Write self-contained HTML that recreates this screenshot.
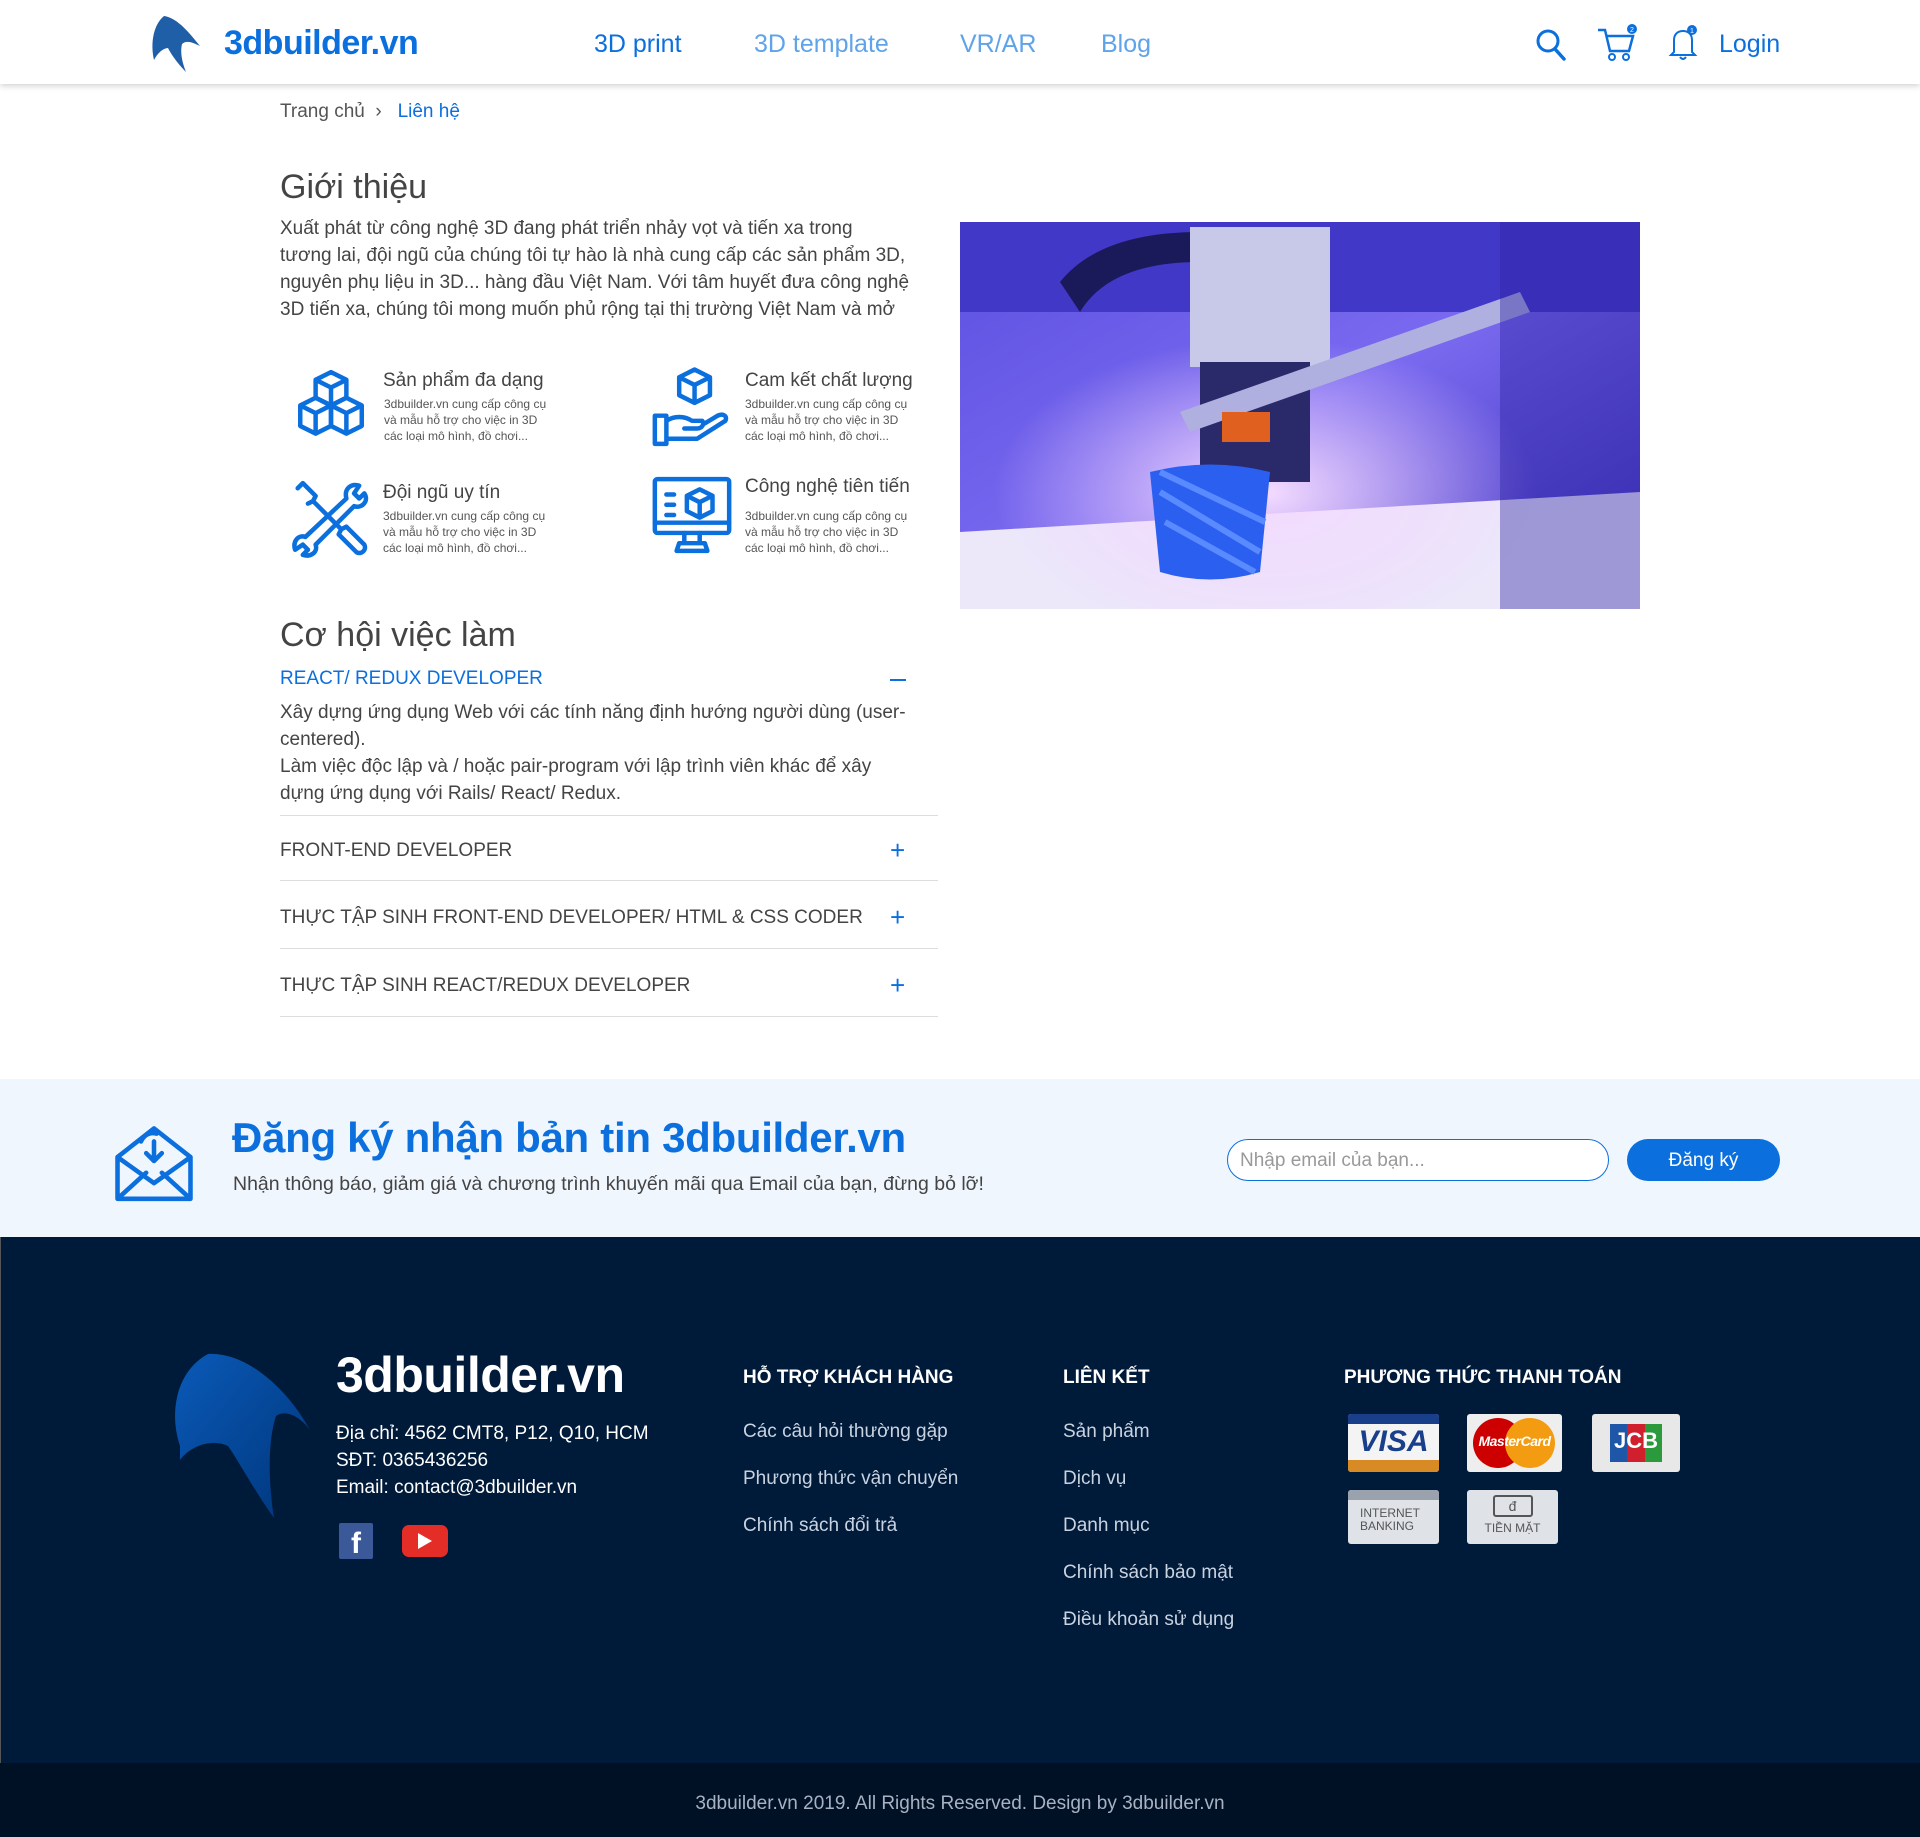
<!DOCTYPE html>
<html><head><meta charset="utf-8"><style>
*{margin:0;padding:0;box-sizing:border-box}
body{width:1920px;height:1837px;position:relative;font-family:"Liberation Sans",sans-serif;background:#fff;color:#444;overflow:hidden}
.a{position:absolute;white-space:nowrap}
.blue{color:#0b6fde}
.hdr{position:absolute;left:0;top:0;width:1920px;height:84px;background:#fff;box-shadow:0 2px 6px rgba(0,0,0,.18)}
.nav{font-size:25px;color:#5fa3ea;top:30px}
.p{font-size:19px;line-height:27px;color:#444}
.fs{font-size:12px;line-height:16px;color:#555}
.job{font-size:19px;color:#444;left:280px}
.hr{position:absolute;left:280px;width:658px;height:1px;background:#ddd}
.plus{position:absolute;left:890px;font-size:26px;color:#0b6fde;font-weight:300}
.fl{font-size:19px;color:#c9d3e0}
.fh{font-size:19px;font-weight:bold;color:#fff;top:1367px}
.card{position:absolute;border-radius:3px;overflow:hidden}
</style></head><body>
<div class="hdr"></div>
<svg class="a" style="left:150px;top:12px" width="55" height="62" viewBox="0 0 55 62"><path d="M4 48 C0 30 4 12 14 4 C28 6 40 22 50 34 C42 30 36 28 32 32 C30 40 32 50 36 60 C26 50 20 40 18 36 C14 36 8 40 4 48Z" fill="#1f5fa8"/></svg>
<div class="a" style="left:224px;top:24px;font-size:34px;font-weight:bold;color:#0b6fde;letter-spacing:-0.5px">3dbuilder.vn</div>
<div class="a nav" style="left:594px;color:#0b6fde">3D print</div>
<div class="a nav" style="left:754px">3D template</div>
<div class="a nav" style="left:960px">VR/AR</div>
<div class="a nav" style="left:1101px">Blog</div>
<svg class="a" style="left:1535px;top:28px" width="32" height="34" viewBox="0 0 32 34"><circle cx="13" cy="13" r="10" fill="none" stroke="#0b6fde" stroke-width="3"/><path d="M20 21 L29 31" stroke="#0b6fde" stroke-width="3.5" stroke-linecap="round"/></svg>
<svg class="a" style="left:1596px;top:24px" width="42" height="38" viewBox="0 0 42 38"><path d="M2 6 H9 L14 27 H33 L37 12 H11" fill="none" stroke="#0b6fde" stroke-width="2.5"/><circle cx="16" cy="33" r="3" fill="none" stroke="#0b6fde" stroke-width="2"/><circle cx="30" cy="33" r="3" fill="none" stroke="#0b6fde" stroke-width="2"/><circle cx="36" cy="5" r="5" fill="#0b6fde"/><text x="36" y="8" font-size="7" fill="#fff" text-anchor="middle">2</text></svg>
<svg class="a" style="left:1668px;top:24px" width="32" height="38" viewBox="0 0 32 38"><path d="M6 28 V16 C6 10 10 7 15 7 C20 7 24 10 24 16 V28 L27 31 H3Z" fill="none" stroke="#0b6fde" stroke-width="2"/><path d="M12 33 Q15 37 18 33" fill="none" stroke="#0b6fde" stroke-width="2"/><circle cx="24" cy="6" r="5" fill="#0b6fde"/><text x="24" y="9" font-size="7" fill="#fff" text-anchor="middle">1</text></svg>
<div class="a" style="left:1719px;top:30px;font-size:25px;color:#0b6fde">Login</div>

<div class="a" style="left:280px;top:101px;font-size:19px;color:#555">Trang chủ &nbsp;›&nbsp;&nbsp; <span class="blue">Liên hệ</span></div>
<div class="a" style="left:280px;top:168px;font-size:34px;color:#444">Giới thiệu</div>
<div class="a p" style="left:280px;top:215px">Xuất phát từ công nghệ 3D đang phát triển nhảy vọt và tiến xa trong<br>tương lai, đội ngũ của chúng tôi tự hào là nhà cung cấp các sản phẩm 3D,<br>nguyên phụ liệu in 3D... hàng đầu Việt Nam. Với tâm huyết đưa công nghệ<br>3D tiến xa, chúng tôi mong muốn phủ rộng tại thị trường Việt Nam và mở</div>

<svg class="a" style="left:290px;top:367px" width="82" height="82" viewBox="0 0 64 64" fill="none" stroke="#0b6fde" stroke-width="3.5" stroke-linejoin="round"><path d="M32 4 L44 10 V24 L32 30 L20 24 V10Z M20 10 L32 16 L44 10 M32 16 V30"/><path d="M20 24 L32 30 V46 L20 52 L8 46 V30Z M8 30 L20 36 L32 30 M20 36 V52"/><path d="M44 24 L56 30 V46 L44 52 L32 46 V30Z M32 30 L44 36 L56 30 M44 36 V52"/></svg>
<div class="a" style="left:383px;top:370px;font-size:19px;color:#444">Sản phẩm đa dạng</div>
<div class="a fs" style="left:384px;top:396px">3dbuilder.vn cung cấp công cụ<br>và mẫu hỗ trợ cho việc in 3D<br>các loại mô hình, đồ chơi...</div>

<svg class="a" style="left:651px;top:367px" width="82" height="82" viewBox="0 0 64 64" fill="none" stroke="#0b6fde" stroke-width="3.5" stroke-linejoin="round" stroke-linecap="round"><path d="M34 2 L46 8 V22 L34 28 L22 22 V8Z M22 8 L34 14 L46 8 M34 14 V28"/><path d="M3 38 H12 V60 H3Z M12 42 C18 38 26 38 32 42 H40 C42 44 40 48 36 48 H26 M12 56 H36 L58 42 C60 38 56 36 52 38 L42 44"/></svg>
<div class="a" style="left:745px;top:370px;font-size:19px;color:#444">Cam kết chất lượng</div>
<div class="a fs" style="left:745px;top:396px">3dbuilder.vn cung cấp công cụ<br>và mẫu hỗ trợ cho việc in 3D<br>các loại mô hình, đồ chơi...</div>

<svg class="a" style="left:290px;top:478px" width="82" height="82" viewBox="0 0 64 64" fill="none" stroke="#0b6fde" stroke-width="3.5" stroke-linejoin="round" stroke-linecap="round"><path d="M6 8 L10 4 L20 14 L18 18 L40 40 L44 38 L58 52 C60 56 56 60 52 58 L38 44 L40 40 M18 18 L14 20 Z"/><path d="M54 6 C48 4 42 8 44 16 L12 46 C6 44 2 50 4 56 L10 52 L14 56 L10 60 C16 62 22 58 20 52 L50 22 C56 24 62 18 58 12 L54 16 L50 12Z"/></svg>
<div class="a" style="left:383px;top:482px;font-size:19px;color:#444">Đội ngũ uy tín</div>
<div class="a fs" style="left:383px;top:508px">3dbuilder.vn cung cấp công cụ<br>và mẫu hỗ trợ cho việc in 3D<br>các loại mô hình, đồ chơi...</div>

<svg class="a" style="left:651px;top:474px" width="82" height="82" viewBox="0 0 64 64" fill="none" stroke="#0b6fde" stroke-width="3.5" stroke-linejoin="round" stroke-linecap="round"><rect x="3" y="4" width="58" height="42" rx="2"/><path d="M3 38 H61 M26 46 V54 M38 46 V54 M20 60 H44 L42 54 H22Z M12 16 H18 M12 24 H18 M12 32 H18"/><path d="M38 12 L48 17 V29 L38 34 L28 29 V17Z M28 17 L38 22 L48 17 M38 22 V34"/></svg>
<div class="a" style="left:745px;top:476px;font-size:19px;color:#444">Công nghệ tiên tiến</div>
<div class="a fs" style="left:745px;top:508px">3dbuilder.vn cung cấp công cụ<br>và mẫu hỗ trợ cho việc in 3D<br>các loại mô hình, đồ chơi...</div>

<svg class="a" style="left:960px;top:222px" width="680" height="387" viewBox="0 0 680 387">
<defs><linearGradient id="bg" x1="0" y1="0" x2="1" y2="1"><stop offset="0" stop-color="#5a4fe0"/><stop offset=".5" stop-color="#7a6af0"/><stop offset="1" stop-color="#3a2fb8"/></linearGradient>
<radialGradient id="gl" cx=".45" cy=".7" r=".4"><stop offset="0" stop-color="#f4dcff"/><stop offset="1" stop-color="#f0d0ff" stop-opacity="0"/></radialGradient></defs>
<rect width="680" height="387" fill="url(#bg)"/>
<rect x="0" y="0" width="680" height="90" fill="#4238c8"/>
<path d="M0 310 L680 270 V387 H0Z" fill="#ece8fa"/>
<rect width="680" height="387" fill="url(#gl)"/>
<path d="M100 60 Q140 10 240 10 L240 40 Q150 40 120 90Z" fill="#1a1a5a"/>
<rect x="230" y="5" width="140" height="140" fill="#c8c8e8"/>
<rect x="240" y="140" width="110" height="120" fill="#2a2a6a"/>
<path d="M220 190 L560 70 L570 90 L230 210Z" fill="#b0b0e0"/>
<rect x="262" y="190" width="48" height="30" fill="#e06020"/>
<path d="M190 250 Q250 235 310 250 L300 350 Q250 365 200 350Z" fill="#2a5ff0"/>
<path d="M200 270 L300 330 M205 300 L295 350 M200 250 L305 300" stroke="#5a8aff" stroke-width="6"/>
<rect x="540" y="0" width="140" height="387" fill="#2a20a0" opacity=".4"/>
</svg>

<div class="a" style="left:280px;top:616px;font-size:34px;color:#444">Cơ hội việc làm</div>
<div class="a" style="left:280px;top:668px;font-size:19px;color:#0b6fde">REACT/ REDUX DEVELOPER</div>
<div class="a" style="left:890px;top:679px;width:16px;height:2px;background:#0b6fde"></div>
<div class="a p" style="left:280px;top:699px">Xây dựng ứng dụng Web với các tính năng định hướng người dùng (user-<br>centered).<br>Làm việc độc lập và / hoặc pair-program với lập trình viên khác để xây<br>dựng ứng dụng với Rails/ React/ Redux.</div>
<div class="hr" style="top:815px"></div>
<div class="a job" style="top:840px">FRONT-END DEVELOPER</div><div class="plus" style="top:835px">+</div>
<div class="hr" style="top:880px"></div>
<div class="a job" style="top:907px">THỰC TẬP SINH FRONT-END DEVELOPER/ HTML &amp; CSS CODER</div><div class="plus" style="top:902px">+</div>
<div class="hr" style="top:948px"></div>
<div class="a job" style="top:975px">THỰC TẬP SINH REACT/REDUX DEVELOPER</div><div class="plus" style="top:970px">+</div>
<div class="hr" style="top:1016px"></div>

<div class="a" style="left:0;top:1079px;width:1920px;height:158px;background:#eff6fe"></div>
<svg class="a" style="left:112px;top:1118px" width="84" height="86" viewBox="0 0 64 66" fill="none" stroke="#0b6fde" stroke-width="3.5" stroke-linejoin="round" stroke-linecap="round"><path d="M4 30 L32 8 L60 30 V62 H4Z M4 62 L26 42 M60 62 L38 42 M4 30 L32 50 L60 30"/><path d="M22 18 Q26 10 34 12 M32 18 V32 M26 27 L32 33 L38 27"/></svg>
<div class="a" style="left:232px;top:1114px;font-size:42px;font-weight:bold;color:#0b6fde;letter-spacing:-0.3px">Đăng ký nhận bản tin 3dbuilder.vn</div>
<div class="a" style="left:233px;top:1173px;font-size:19.5px;color:#444">Nhận thông báo, giảm giá và chương trình khuyến mãi qua Email của bạn, đừng bỏ lỡ!</div>
<div class="a" style="left:1227px;top:1139px;width:382px;height:42px;border:1px solid #0b6fde;border-radius:21px;background:#fff;font-size:19px;color:#999;padding:10px 12px">Nhập email của bạn...</div>
<div class="a" style="left:1627px;top:1139px;width:153px;height:42px;border-radius:21px;background:#0b6fde;color:#fff;font-size:19px;text-align:center;line-height:44px">Đăng ký</div>

<div class="a" style="left:0;top:1237px;width:1920px;height:526px;background:#001a39;border-left:1px solid #555"></div>
<div class="a" style="left:0;top:1763px;width:1920px;height:74px;background:#001126"></div>
<div class="a" style="left:0;top:1793px;width:1920px;text-align:center;font-size:19px;color:#a8b2c2">3dbuilder.vn 2019. All Rights Reserved. Design by 3dbuilder.vn</div>

<svg class="a" style="left:168px;top:1350px" width="142" height="170" viewBox="0 0 142 170"><defs><linearGradient id="lg" x1="0" y1="0" x2="1" y2="1"><stop offset="0" stop-color="#0a5ab8"/><stop offset="1" stop-color="#00357a"/></linearGradient></defs><path d="M12 96 C0 60 10 20 40 4 C80 2 120 40 142 80 C130 64 116 60 108 66 C100 90 100 130 106 168 C86 140 70 110 60 96 C44 88 22 96 12 110Z" fill="url(#lg)"/></svg>
<div class="a" style="left:336px;top:1346px;font-size:50px;font-weight:bold;color:#fff;letter-spacing:-0.5px">3dbuilder.vn</div>
<div class="a" style="left:336px;top:1420px;font-size:19px;line-height:27px;color:#fff">Địa chỉ: 4562 CMT8, P12, Q10, HCM<br>SĐT: 0365436256<br>Email: contact@3dbuilder.vn</div>
<div class="a" style="left:339px;top:1523px;width:34px;height:36px;background:#3b5998;border-radius:2px;color:#fff;font-size:30px;font-weight:bold;text-align:center;line-height:42px;overflow:hidden">f</div>
<div class="a" style="left:402px;top:1525px;width:46px;height:32px;background:#e52d27;border-radius:7px"></div>
<svg class="a" style="left:418px;top:1533px" width="14" height="16"><path d="M0 0 L14 8 L0 16Z" fill="#fff"/></svg>

<div class="a fh" style="left:743px">HỖ TRỢ KHÁCH HÀNG</div>
<div class="a fh" style="left:1063px">LIÊN KẾT</div>
<div class="a fh" style="left:1344px">PHƯƠNG THỨC THANH TOÁN</div>
<div class="a fl" style="left:743px;top:1421px">Các câu hỏi thường gặp</div>
<div class="a fl" style="left:743px;top:1468px">Phương thức vận chuyển</div>
<div class="a fl" style="left:743px;top:1515px">Chính sách đổi trả</div>
<div class="a fl" style="left:1063px;top:1421px">Sản phẩm</div>
<div class="a fl" style="left:1063px;top:1468px">Dịch vụ</div>
<div class="a fl" style="left:1063px;top:1515px">Danh mục</div>
<div class="a fl" style="left:1063px;top:1562px">Chính sách bảo mật</div>
<div class="a fl" style="left:1063px;top:1609px">Điều khoản sử dụng</div>

<div class="card" style="left:1348px;top:1414px;width:91px;height:58px;background:#f4f4f4"><div style="height:10px;background:#1a3f8a"></div><div style="text-align:center;font-size:30px;font-weight:bold;font-style:italic;color:#1a3f8a;line-height:36px">VISA</div><div style="height:12px;background:#d88a24"></div></div>
<div class="card" style="left:1467px;top:1414px;width:95px;height:58px;background:#eee"><div style="position:absolute;left:6px;top:4px;width:50px;height:50px;border-radius:50%;background:#cc0000"></div><div style="position:absolute;left:38px;top:4px;width:50px;height:50px;border-radius:50%;background:#f39c12"></div><div style="position:absolute;left:0;top:19px;width:95px;text-align:center;color:#fff;font-size:14px;font-weight:bold;font-style:italic;letter-spacing:-0.5px">MasterCard</div></div>
<div class="card" style="left:1592px;top:1414px;width:88px;height:58px;background:#e8e8e8"><div style="position:absolute;left:18px;top:10px;width:52px;height:38px;display:flex"><div style="flex:1;background:#1f57a8"></div><div style="flex:1;background:#d0202e"></div><div style="flex:1;background:#2a9a3c"></div></div><div style="position:absolute;left:0;top:14px;width:88px;text-align:center;color:#fff;font-size:22px;font-weight:bold">JCB</div></div>
<div class="card" style="left:1348px;top:1490px;width:91px;height:54px;background:#dfe3e8"><div style="height:10px;background:#9aa3ad"></div><div style="font-size:12px;line-height:13px;color:#555;padding:7px 0 0 12px">INTERNET<br>BANKING</div></div>
<div class="card" style="left:1467px;top:1490px;width:91px;height:54px;background:#dfe3e8;text-align:center"><div style="margin:5px auto 0;width:40px;height:22px;border:2px solid #555;border-radius:3px;font-size:14px;line-height:18px;color:#555">đ</div><div style="font-size:12px;color:#555;margin-top:4px">TIỀN MẶT</div></div>
</body></html>
